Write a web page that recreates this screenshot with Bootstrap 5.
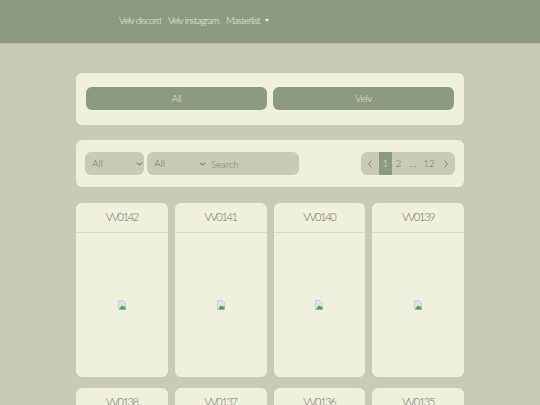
<!DOCTYPE html>
<html lang="en"><head><meta charset="utf-8">
<title>Velv</title>
<link href="https://cdn.jsdelivr.net/npm/bootstrap@5.3.0/dist/css/bootstrap.min.css" rel="stylesheet">
<style>
html,body{height:405px;overflow:hidden}
body{background:#c9cbb5;font-family:"Lato","Open Sans",sans-serif;font-weight:300;color:#6f7265;font-size:10px}
.topbar{background:#8c9b80;height:43px;padding:0 0 0 119px;box-shadow:0 1px 1px #b9bea6}
.topbar .navbar-nav{gap:7px}
.topbar .navbar-nav .nav-link{color:#f0f2e0;font-size:9.5px;letter-spacing:-.6px;padding:0;white-space:nowrap}
.topbar .dropdown-toggle::after{margin-left:5px;vertical-align:2px;border-top-width:3px;border-left-width:2.5px;border-right-width:2.5px}
.sheet{width:388px;margin:0 0 0 76px}
.panel-a{background:#f0f0de;border-radius:6px;padding:14px 10px 15px;margin-top:30px;gap:6px;height:52px}
.panel-a .btn{background:#8c9b80;border:0;color:#e4e7d2;font-size:10px;height:23px;padding:0;border-radius:6px;font-weight:300;flex:1 1 0;letter-spacing:-.3px}
.panel-b{background:#f0f0de;border-radius:6px;margin-top:15px;height:47px;padding:12px 9px}
.pick{background-color:#c9cbb5;border:0;border-radius:6px;height:23px;color:#6f7265;font-size:10px;font-weight:300;padding:0 0 0 7px;background-position:right 1px center;background-size:7px 6px;box-shadow:none;flex:none}
.pick-a{width:59px}
.pick-group{width:152px;margin-left:3px;background:#c9cbb5;border-radius:6px;height:23px}
.pick-b{width:60px;background-color:transparent;background-position:right 1.5px center}
.find{background:transparent;border:0;font-size:10px;font-weight:300;height:23px;padding:0 0 0 4px;color:#6f7265;box-shadow:none;letter-spacing:-.2px;min-width:0;flex:1 1 0}
.find::placeholder{color:#7c7f70;opacity:1}
.pager{margin:0;background:#c9cbb5;border-radius:6px;height:23px;overflow:hidden;width:94px;font-size:10px}
.pager .page-item{display:flex}
.pager .page-item .page-link{background:transparent;border:0;border-radius:0;color:#6f7265;font-size:10px;display:flex;align-items:center;justify-content:center;height:23px;padding:0;width:13px;margin:0}
.pager .page-item.active .page-link{background:#8c9b80;color:#e4e7d2}
.pager .page-item .page-link.edge{width:18px}
.pager .page-item .page-link.dots,.pager .page-item .page-link.wide{width:16px}
.tiles{display:grid;grid-template-columns:repeat(4,1fr);column-gap:7px;row-gap:11px;margin-top:16px}
.tile{background:#f0f0de;border:0;border-radius:6px;height:174px;overflow:hidden}
.tile .card-header{background:transparent;border-bottom:1px solid #d9dbc5;height:30px;padding:0;display:flex;align-items:center;justify-content:center;font-size:11px;letter-spacing:-1.3px;color:#6f7265;font-weight:300}
.tile .card-body{display:flex;align-items:center;justify-content:center;padding:0}
</style></head>
<body>
<nav class="navbar navbar-expand topbar">
<ul class="navbar-nav">
<li class="nav-item"><a class="nav-link" href="#">Velv discord</a></li>
<li class="nav-item"><a class="nav-link" href="#">Velv instagram</a></li>
<li class="nav-item dropdown"><a class="nav-link dropdown-toggle" href="#" role="button">Masterlist</a></li>
</ul>
</nav>
<main class="sheet">
<section class="panel-a d-flex"><button class="btn" type="button">All</button><button class="btn" type="button">Velv</button></section>
<section class="panel-b d-flex justify-content-between align-items-center">
<div class="d-flex">
<select class="form-select pick pick-a" aria-label="Type"><option>All</option></select>
<div class="pick-group d-flex">
<select class="form-select pick pick-b" aria-label="Group"><option>All</option></select>
<input class="form-control find" type="text" placeholder="Search">
</div>
</div>
<ul class="pagination pager">
<li class="page-item"><a class="page-link edge" href="#" aria-label="Previous"><svg width="6" height="10" viewBox="0 0 6 10"><path d="M4.5 1.5L1.5 5l3 3.5" fill="none" stroke="#6f7265" stroke-width=".8"/></svg></a></li>
<li class="page-item active"><a class="page-link" href="#">1</a></li>
<li class="page-item"><a class="page-link" href="#">2</a></li>
<li class="page-item"><a class="page-link dots" href="#">...</a></li>
<li class="page-item"><a class="page-link wide" href="#">12</a></li>
<li class="page-item"><a class="page-link edge" href="#" aria-label="Next"><svg width="6" height="10" viewBox="0 0 6 10"><path d="M1.5 1.5L4.5 5l-3 3.5" fill="none" stroke="#6f7265" stroke-width=".8"/></svg></a></li>
</ul>
</section>
<section class="tiles">
<div class="card tile"><div class="card-header">VV0142</div><div class="card-body"><svg width="8" height="10" viewBox="0 0 8 10"><path d="M.5.5h4.5l2.5 2.5v6.5h-7z" fill="#dfe5ee" stroke="#b3bccb" stroke-width=".6"/><path d="M1 9.5l2.5-4 4 1.5v2.5z" fill="#5aa04a"/></svg></div></div>
<div class="card tile"><div class="card-header">VV0141</div><div class="card-body"><svg width="8" height="10" viewBox="0 0 8 10"><path d="M.5.5h4.5l2.5 2.5v6.5h-7z" fill="#dfe5ee" stroke="#b3bccb" stroke-width=".6"/><path d="M1 9.5l2.5-4 4 1.5v2.5z" fill="#5aa04a"/></svg></div></div>
<div class="card tile"><div class="card-header">VV0140</div><div class="card-body"><svg width="8" height="10" viewBox="0 0 8 10"><path d="M.5.5h4.5l2.5 2.5v6.5h-7z" fill="#dfe5ee" stroke="#b3bccb" stroke-width=".6"/><path d="M1 9.5l2.5-4 4 1.5v2.5z" fill="#5aa04a"/></svg></div></div>
<div class="card tile"><div class="card-header">VV0139</div><div class="card-body"><svg width="8" height="10" viewBox="0 0 8 10"><path d="M.5.5h4.5l2.5 2.5v6.5h-7z" fill="#dfe5ee" stroke="#b3bccb" stroke-width=".6"/><path d="M1 9.5l2.5-4 4 1.5v2.5z" fill="#5aa04a"/></svg></div></div>
<div class="card tile"><div class="card-header">VV0138</div></div>
<div class="card tile"><div class="card-header">VV0137</div></div>
<div class="card tile"><div class="card-header">VV0136</div></div>
<div class="card tile"><div class="card-header">VV0135</div></div>
</section>
</main>
<script src="https://cdn.jsdelivr.net/npm/bootstrap@5.3.0/dist/js/bootstrap.bundle.min.js"></script>
</body></html>
